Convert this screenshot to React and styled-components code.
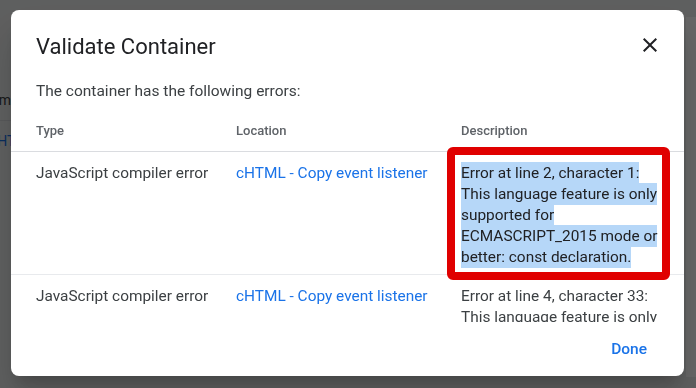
import React from 'react'
import styled, { createGlobalStyle } from 'styled-components'

const GlobalStyle = createGlobalStyle`
  html, body {
    margin: 0;
    padding: 0;
  }
  body {
    width: 696px;
    height: 388px;
    overflow: hidden;
    background: #eceeee;
    font-family: Roboto, "Noto Sans", Arial, sans-serif;
  }
`;

// the page behind the modal, only a sliver of it shows
const Page = styled.div`
    display: flex;
    justify-content: space-between;
    height: 388px;
`;

const PageList = styled.div`
    width: 11px;
    display: flex;
    flex-direction: column;
    padding-top: 80px;
    overflow: hidden;
`;

const PageRow = styled.div`
    height: 40px;
    display: flex;
    align-items: center;
    align-self: ${props => props.end ? 'flex-end' : 'flex-start'};
    margin-left: ${props => props.end ? '0' : '-10px'};
    white-space: nowrap;
    font-size: 14px;
    color: ${props => props.link ? '#1a73e8' : '#3c4043'};
    border-bottom: ${props => props.end ? '1px solid #dadce0' : 'none'};
`;

const PagePanel = styled.div`
    width: 10px;
    margin-top: 17px;
    height: 360px;
    background: #ffffff;
`;

const Overlay = styled.div`
    position: fixed;
    inset: 0;
    display: flex;
    padding: 10px 12px 12px 11px;
    background: rgba(0, 0, 0, 0.6);
`;

const Dialog = styled.div`
    flex: 1;
    display: flex;
    flex-direction: column;
    background: #ffffff;
    border-radius: 8px;
    overflow: hidden;
    color: #3c4043;
    box-shadow: 0 11px 15px -7px rgba(0, 0, 0, 0.2), 0 24px 38px 3px rgba(0, 0, 0, 0.14);
`;

const Header = styled.div`
    display: flex;
    justify-content: space-between;
    align-items: flex-start;
    padding: 23px 22px 0 25px;
`;

const Title = styled.h2`
    margin: 0;
    font-size: 22px;
    font-weight: 400;
    line-height: 28px;
    color: #202124;
`;

const CloseButton = styled.button`
    width: 24px;
    height: 24px;
    padding: 0;
    border: none;
    background: none;
    color: #202124;
    cursor: pointer;
`;

const Intro = styled.p`
    margin: 20px 25px 0;
    font-size: 15.5px;
    line-height: 20px;
    color: #3c4043;
`;

const Scroll = styled.div`
    flex: 1;
    min-height: 0;
    overflow: hidden;
`;

const Row = styled.div`
    display: grid;
    grid-template-columns: 200px 225px 200px;
    padding: ${props => props.head ? '20px 25px 10px' : '11px 25px 6px'};
    border-bottom: 1px solid ${props => props.head ? '#dadce0' : '#e8eaed'};
    font-size: ${props => props.head ? '13px' : '15.4px'};
    font-weight: ${props => props.head ? 500 : 400};
    line-height: ${props => props.head ? '20px' : '21px'};
    color: ${props => props.head ? '#5f6368' : '#3c4043'};
`;

const Link = styled.a`
    color: #1a73e8;
    text-decoration: none;
    cursor: pointer;
`;

const Cell = styled.div`
    position: relative;
`;

const Selected = styled.span`
    background: #b6d7f8;
    color: #202124;
    padding: 2px 0;
    -webkit-box-decoration-break: clone;
    box-decoration-break: clone;
`;

// red annotation box drawn over the screenshot
const Marker = styled.div`
    position: absolute;
    top: -16px;
    left: -14px;
    width: 223px;
    height: 133px;
    box-sizing: border-box;
    border: 8px solid #e00000;
    border-radius: 6px;
    pointer-events: none;
`;

const Footer = styled.div`
    height: 54px;
    display: flex;
    justify-content: flex-end;
    align-items: center;
    padding-right: 29px;
`;

const DoneButton = styled.button`
    height: 36px;
    padding: 0 8px;
    border: none;
    background: none;
    font-family: inherit;
    font-size: 15.5px;
    font-weight: 500;
    color: #1a73e8;
    cursor: pointer;
`;

const errors = [
    {
        type: 'JavaScript compiler error',
        location: 'cHTML - Copy event listener',
        description: 'Error at line 2, character 1: This language feature is only supported for ECMASCRIPT_2015 mode or better: const declaration.',
        marked: true,
    },
    {
        type: 'JavaScript compiler error',
        location: 'cHTML - Copy event listener',
        description: 'Error at line 4, character 33: This language feature is only supported for ECMASCRIPT_2015 mode or better: const declaration.',
        marked: false,
    },
];

function App() {
    return (
        <>
            <GlobalStyle />
            <Page>
                <PageList>
                    <PageRow end>Custom</PageRow>
                    <PageRow link>cHTML</PageRow>
                </PageList>
                <PagePanel />
            </Page>

            <Overlay>
                <Dialog>
                    <Header>
                        <Title>Validate Container</Title>
                        <CloseButton aria-label="Close">
                            <svg width="24" height="24" viewBox="0 0 24 24" fill="currentColor">
                                <path d="M19 6.41L17.59 5 12 10.59 6.41 5 5 6.41 10.59 12 5 17.59 6.41 19 12 13.41 17.59 19 19 17.59 13.41 12z" />
                            </svg>
                        </CloseButton>
                    </Header>

                    <Intro>The container has the following errors:</Intro>

                    <Scroll>
                        <Row head>
                            <div>Type</div>
                            <div>Location</div>
                            <div>Description</div>
                        </Row>
                        {errors.map((err, i) => (
                            <Row key={i}>
                                <Cell>{err.type}</Cell>
                                <Cell><Link>{err.location}</Link></Cell>
                                <Cell>
                                    {err.marked ? <Selected>{err.description}</Selected> : err.description}
                                    {err.marked && <Marker />}
                                </Cell>
                            </Row>
                        ))}
                    </Scroll>

                    <Footer>
                        <DoneButton>Done</DoneButton>
                    </Footer>
                </Dialog>
            </Overlay>
        </>
    )
}

export default App
